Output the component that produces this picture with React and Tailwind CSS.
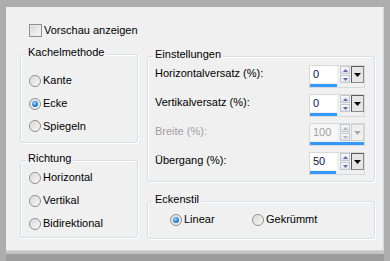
import React from 'react';

function Radio({ checked, label, className = '' }) {
    return (
        <div className={`flex items-center gap-[2px] ${className}`}>
            <span className="w-[12px] h-[12px] rounded-full border border-[#8e8f8f] bg-[linear-gradient(135deg,#d4d4d4,#fbfbfb)] shadow-[inset_0_0_0_1px_#ececec] flex items-center justify-center">
                {checked && (
                    <span className="w-[6px] h-[6px] rounded-full bg-[radial-gradient(circle_at_40%_35%,#9edcff,#2580cc_55%,#0a4584)]" />
                )}
            </span>
            <span>{label}</span>
        </div>
    );
}

function Group({ title, className = '', children }) {
    return (
        <fieldset className={`border border-[#d5dfe5] rounded-[3px] shadow-[inset_1px_1px_0_#fff,1px_1px_0_#fff] px-[5px] ${className}`}>
            <legend className="px-[2px] pb-[4px] leading-[13px]">{title}</legend>
            {children}
        </fieldset>
    );
}

function Arrow({ up, disabled }) {
    return (
        <svg width="5" height="3" viewBox="0 0 5 3">
            <path d={up ? 'M0 3 L2.5 0 L5 3 Z' : 'M0 0 L5 0 L2.5 3 Z'} fill={disabled ? '#b5b5c5' : '#6464a8'} />
        </svg>
    );
}

function Spin({ value, disabled, barClass }) {
    return (
        <div className="w-[56px] h-[23px] border border-[#d9d9d9] flex flex-col">
            <div className="flex h-[17px]">
                <div className={`w-[27px] pl-[3px] leading-[17px] ${disabled ? 'bg-[#f7f7f7] text-[#a0a0a0]' : 'bg-white text-[#10104a]'}`}>
                    {value}
                </div>
                <div className="ml-[3px] w-[10px] flex flex-col gap-[1px]">
                    <div className="h-[8px] border border-[#c3c7d3] bg-[linear-gradient(#fafafa,#e3e5ec)] flex items-center justify-center">
                        <Arrow up disabled={disabled} />
                    </div>
                    <div className="h-[8px] border border-[#c3c7d3] bg-[linear-gradient(#fafafa,#e3e5ec)] flex items-center justify-center">
                        <Arrow disabled={disabled} />
                    </div>
                </div>
                <div
                    className={`ml-[1px] w-[13px] flex items-center justify-center ${
                        disabled
                            ? 'border border-[#d0d0d0] bg-[#f0f0f0]'
                            : 'border border-t-[#5a5a5a] border-l-[#5a5a5a] border-r-[#8a8a8a] border-b-[#8a8a8a] bg-[#e6e6e6]'
                    }`}
                >
                    <svg width="7" height="4" viewBox="0 0 7 4">
                        <path d="M0 0 L7 0 L3.5 4 Z" fill={disabled ? '#a8a8a8' : '#000'} />
                    </svg>
                </div>
            </div>
            <div className={`mt-[1px] h-[3px] bg-[#3399ff] ${barClass}`} />
        </div>
    );
}

function Row({ label, value, disabled, barClass }) {
    return (
        <div className="flex items-start justify-between h-[29px] pl-[2px]">
            <span className={`mt-[2px] leading-[13px] ${disabled ? 'text-[#a0a0a0]' : ''}`}>{label}</span>
            <Spin value={value} disabled={disabled} barClass={barClass} />
        </div>
    );
}

export default function App() {
    return (
        <div className="w-[390px] h-[261px] bg-[#adadad] flex flex-col pt-[7px] px-[6px] font-['Liberation_Sans',Arial,sans-serif] text-[11px] text-black">
            <div className="h-[244px] bg-[#f0f0f0] border-b border-r border-[#d6d6d6] pt-[17px] pl-[14px] flex flex-col">
                <div className="flex items-center gap-[2px] h-[13px] ml-[9px] leading-[13px]">
                    <span className="w-[13px] h-[13px] border border-[#8e8f8f] bg-[linear-gradient(135deg,#d4d4d4,#fbfbfb)] shadow-[inset_0_0_0_1px_#ececec]" />
                    <span>Vorschau anzeigen</span>
                </div>

                <div className="flex gap-[9px] mt-[9px]">
                    <div className="w-[118px] flex flex-col">
                        <Group title="Kachelmethode" className="pb-[5px]">
                            <div className="pl-[3px] pt-[6px]">
                                <Radio label="Kante" className="h-[23px]" />
                                <Radio label="Ecke" checked className="h-[23px]" />
                                <Radio label="Spiegeln" className="h-[22px]" />
                            </div>
                        </Group>
                        <Group title="Richtung" className="mt-[9px] pb-[2px]">
                            <div className="pl-[3px] -mt-[3px]">
                                <Radio label="Horizontal" className="h-[23px]" />
                                <Radio label="Vertikal" className="h-[23px]" />
                                <Radio label="Bidirektional" className="h-[23px]" />
                            </div>
                        </Group>
                    </div>

                    <div className="w-[228px] flex flex-col mt-[2px]">
                        <Group title="Einstellungen" className="pr-[9px]">
                            <Row label="Horizontalversatz (%):" value="0" barClass="w-[27px]" />
                            <Row label="Vertikalversatz (%):" value="0" barClass="w-[27px]" />
                            <Row label="Breite (%):" value="100" disabled barClass="w-[54px]" />
                            <Row label="Übergang (%):" value="50" barClass="w-[26px]" />
                        </Group>
                        <Group title="Eckenstil" className="mt-[11px] pb-[12px]">
                            <div className="flex pl-[17px] pt-[3px] h-[16px] items-center">
                                <Radio label="Linear" checked className="w-[82px]" />
                                <Radio label="Gekrümmt" />
                            </div>
                        </Group>
                    </div>
                </div>
            </div>
            <div className="h-[3px] bg-[#c4c4c4]" />
            <div className="flex-1 bg-[#9c9c9c]" />
        </div>
    );
}
